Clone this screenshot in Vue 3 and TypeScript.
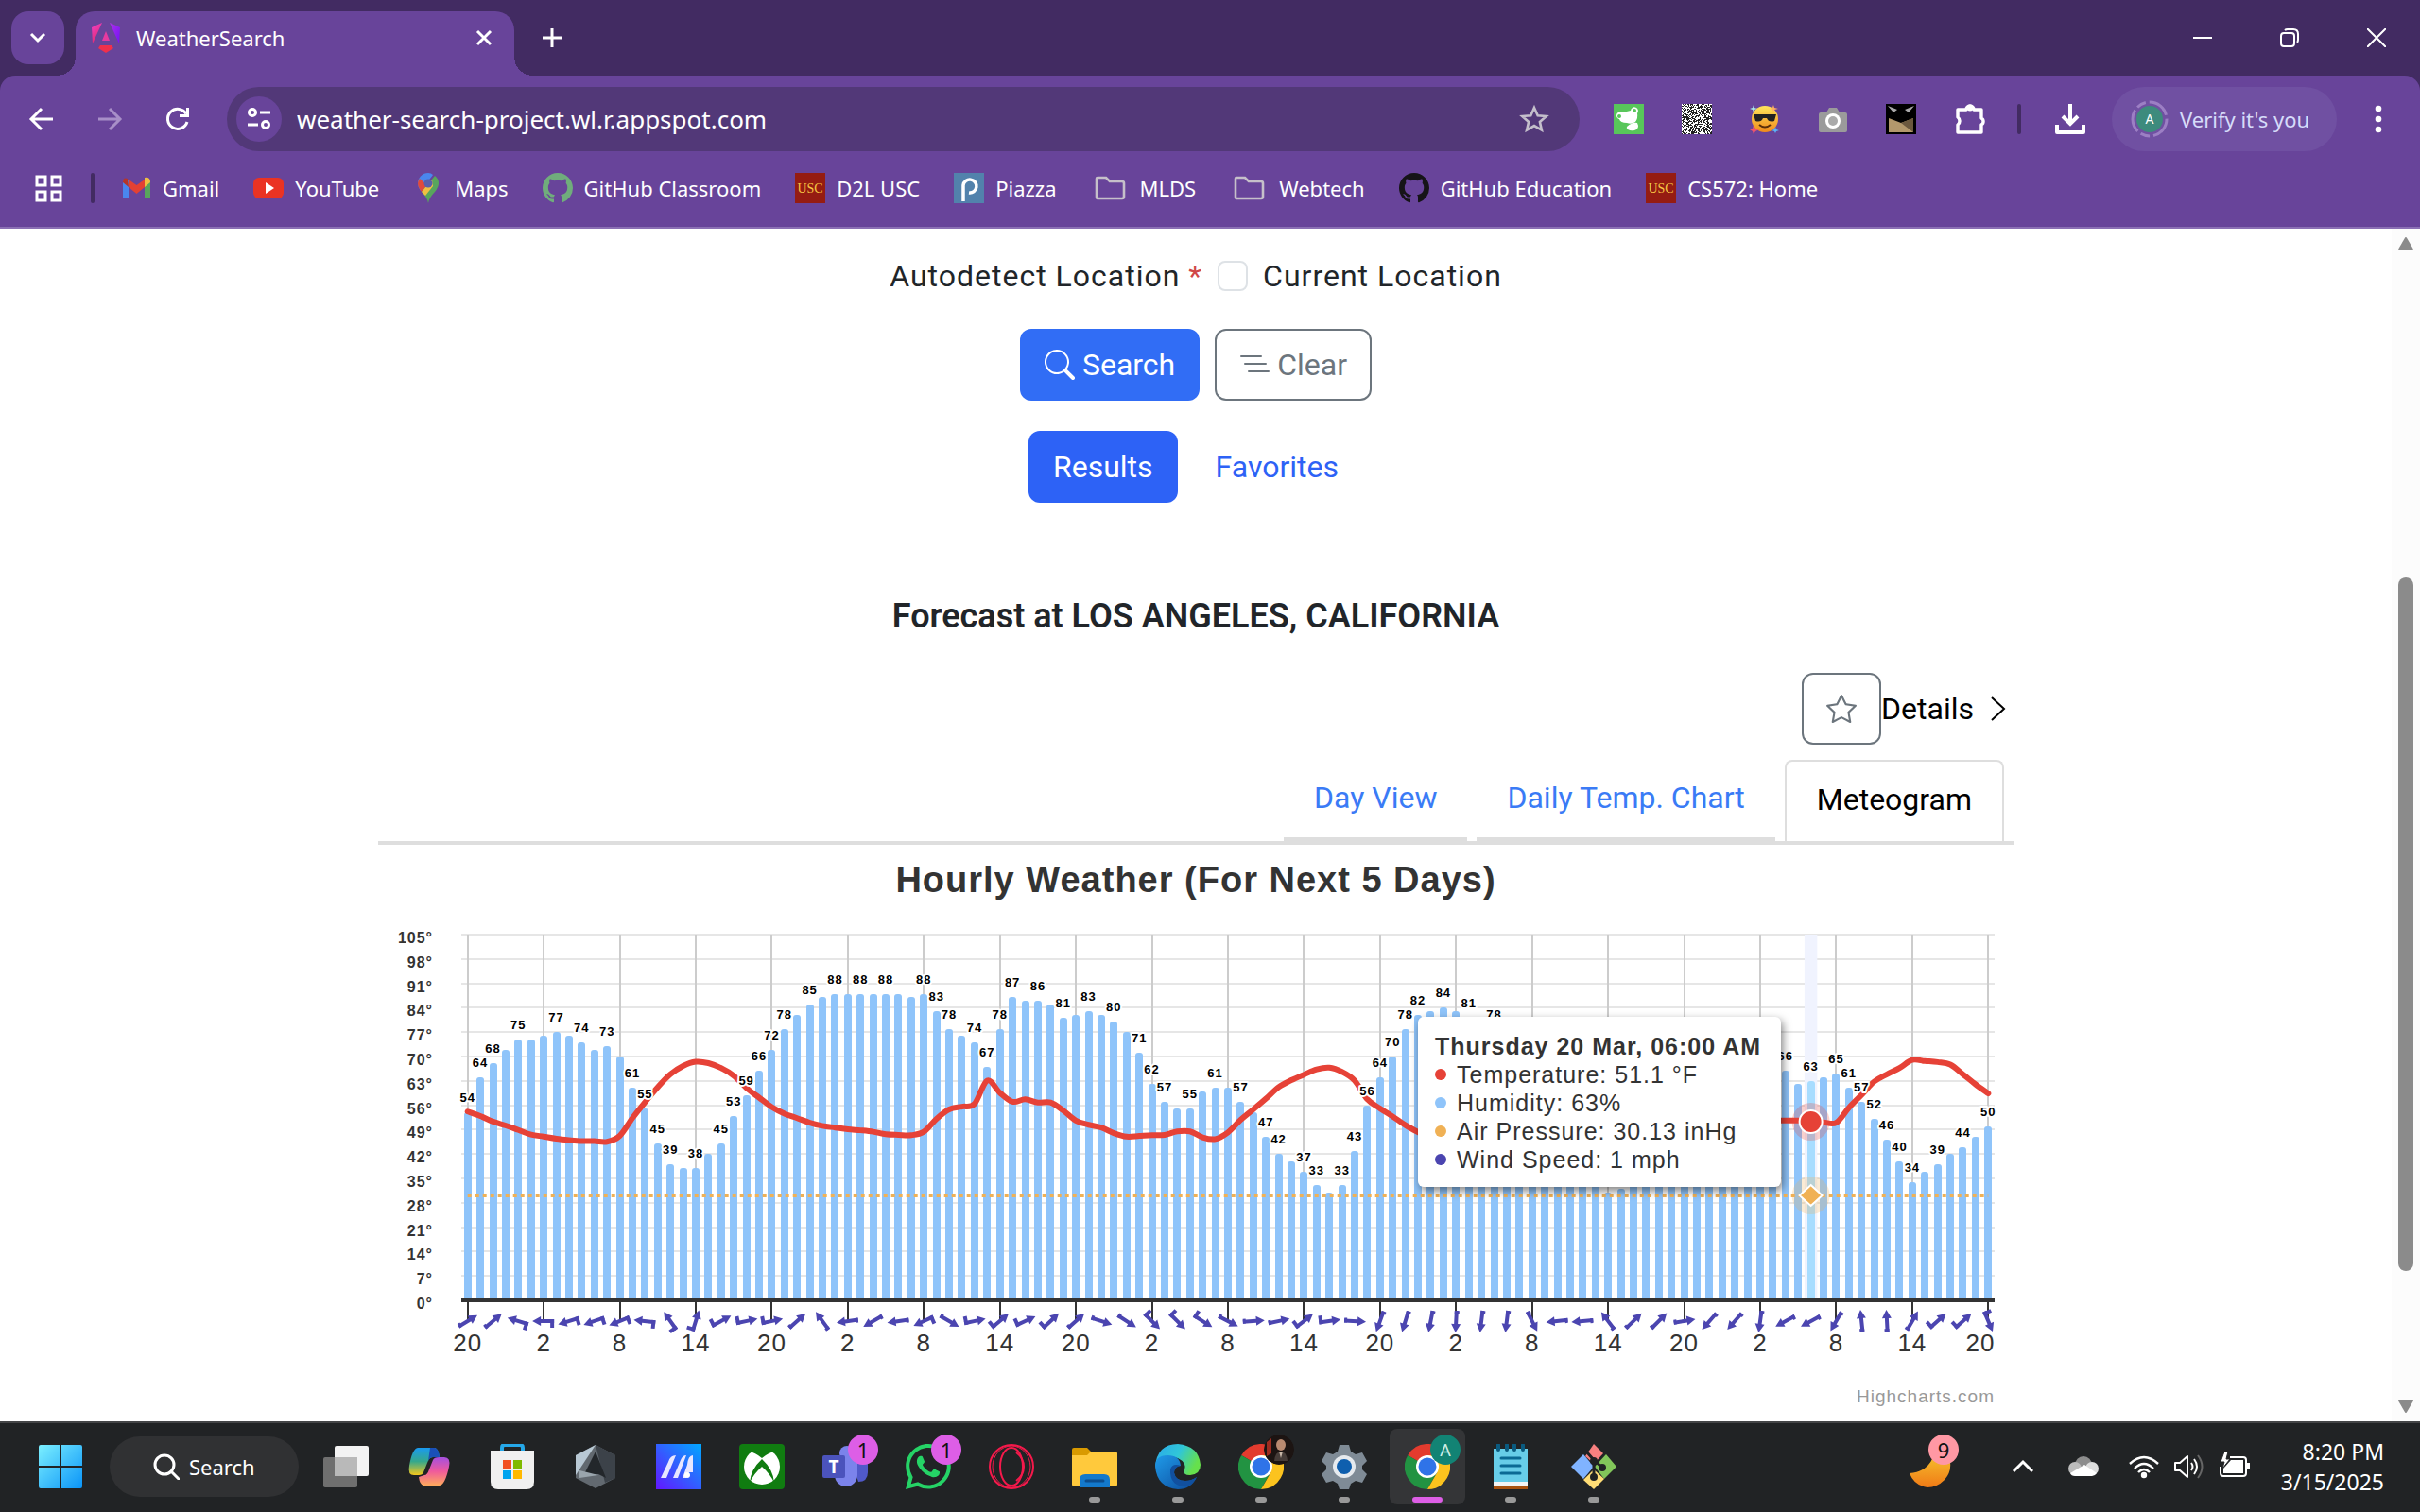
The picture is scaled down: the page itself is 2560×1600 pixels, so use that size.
<script setup lang="ts">
import { computed, ref } from 'vue'

const address = ref('weather-search-project.wl.r.appspot.com')
const useCurrent = ref(false)

interface Bookmark { label: string; icon: string }
const bookmarks: Bookmark[] = [
  { label: 'Gmail', icon: 'gmail' },
  { label: 'YouTube', icon: 'youtube' },
  { label: 'Maps', icon: 'maps' },
  { label: 'GitHub Classroom', icon: 'github-green' },
  { label: 'D2L USC', icon: 'usc' },
  { label: 'Piazza', icon: 'piazza' },
  { label: 'MLDS', icon: 'folder' },
  { label: 'Webtech', icon: 'folder' },
  { label: 'GitHub Education', icon: 'github' },
  { label: 'CS572: Home', icon: 'usc' },
]

const githubPath = 'M8 0C3.58 0 0 3.58 0 8c0 3.54 2.29 6.53 5.47 7.59.4.07.55-.17.55-.38 0-.19-.01-.82-.01-1.49-2.01.37-2.53-.49-2.69-.94-.09-.23-.48-.94-.82-1.13-.28-.15-.68-.52-.01-.53.63-.01 1.08.58 1.23.82.72 1.21 1.87.87 2.33.66.07-.52.28-.87.51-1.07-1.78-.2-3.64-.89-3.64-3.95 0-.87.31-1.59.82-2.15-.08-.2-.36-1.02.08-2.12 0 0 .67-.21 2.2.82.64-.18 1.32-.27 2-.27.68 0 1.36.09 2 .27 1.53-1.04 2.2-.82 2.2-.82.44 1.1.16 1.92.08 2.12.51.56.82 1.27.82 2.15 0 3.07-1.87 3.75-3.65 3.95.29.25.54.73.54 1.48 0 1.07-.01 1.93-.01 2.2 0 .21.15.46.55.38A8.013 8.013 0 0016 8c0-4.42-3.58-8-8-8z'

// Dense module pattern for the QR extension icon
const qrPath = (() => {
  let seed = 7
  let d = ''
  for (let y = 0; y < 32; y++) {
    for (let x = 0; x < 32; x++) {
      seed = (seed * 16807) % 2147483647
      if ((seed >> 10) % 2) d += `M${x} ${y}h1v1h-1z`
    }
  }
  return d
})()

interface TaskApp { name: string; badge?: string; state?: string }
const apps: TaskApp[] = [
  { name: 'taskview' }, { name: 'copilot' }, { name: 'store' }, { name: 'armoury' },
  { name: 'myasus' }, { name: 'xbox' }, { name: 'teams', badge: '1' }, { name: 'whatsapp', badge: '1' },
  { name: 'opera' }, { name: 'files', state: 'open' }, { name: 'edge', state: 'open' },
  { name: 'chrome-photo', state: 'open' }, { name: 'settings', state: 'open' },
  { name: 'chrome-a', state: 'active' }, { name: 'notepad', state: 'open' }, { name: 'git', state: 'open' },
]

// Plot geometry, in chart units
const left = 88
const right = 1710
const top = 95
const bottom = 482
const step = (right - left) / 121
const xAt = (i: number) => left + step * (i + 0.5)
const yAt = (v: number) => bottom - (v * (bottom - top)) / 105

const humidity = [
  54, 64, 68, 72, 75, 75, 76, 77, 76, 74, 72, 73, 70, 61, 55, 45, 39, 38, 38, 42, 45, 53, 59, 66,
  72, 78, 82, 85, 87, 88, 88, 88, 88, 88, 88, 87, 88, 83, 78, 76, 74, 67, 78, 87, 86, 86, 85, 81,
  82, 83, 82, 80, 77, 71, 62, 57, 55, 55, 60, 61, 61, 57, 54, 47, 42, 40, 37, 33, 31, 33, 43, 56,
  64, 70, 78, 82, 83, 84, 83, 81, 79, 78, 76, 70, 62, 54, 48, 42, 37, 34, 31, 32, 34, 38, 44, 52,
  58, 62, 66, 70, 72, 72, 70, 68, 66, 62, 63, 64, 65, 61, 57, 52, 46, 40, 34, 37, 39, 42, 44, 47, 50,
]
const labelled = [
  0, 1, 2, 4, 7, 9, 11, 13, 14, 15, 16, 18, 20, 21, 22, 23, 24, 25, 27, 29, 31, 33, 36, 37, 38, 40, 41,
  42, 43, 45, 47, 49, 51, 53, 54, 55, 57, 59, 61, 63, 64, 66, 67, 69, 70, 71, 72, 73, 74, 75, 77, 79, 81,
  104, 106, 108, 109, 110, 111, 112, 113, 114, 116, 118, 120,
]
const temperature = [
  54.2, 52.9, 51.3, 50.2, 48.9, 47.6, 47, 46.4, 46, 45.7, 45.7, 45.5, 47.2, 52.3, 56.9, 61.2, 64.9, 67.3,
  68.5, 68.1, 66.7, 64.5, 61, 58.2, 55.5, 53.6, 52.3, 51, 50.1, 49.6, 49.1, 48.8, 48.4, 47.7, 47.5, 47.4,
  48.4, 52.1, 54.8, 55.6, 56.4, 63.1, 59.6, 57, 57.7, 56.8, 56.8, 54.5, 51.6, 50.4, 49.6, 48, 47, 47.2,
  47.4, 47.5, 48.5, 48.5, 46.8, 46.3, 48.2, 51.8, 54.8, 57.9, 61.2, 63.2, 64.8, 66.3, 66.8, 65.6, 63.1,
  57.7, 55.1, 52.8, 50.3, 48.3, 46.6, 45.5, 44.8, 44, 43.5, 43.2, 43, 43.5, 46, 50, 54, 58, 61, 63, 65,
  65, 63, 61, 59, 57, 55, 54, 53, 52.3, 52, 51.8, 51.7, 51.7, 51.6, 51.6, 51.5, 51.1, 51, 55.3, 59,
  62.8, 64.9, 66.7, 69, 68.7, 68.4, 67.7, 64.9, 62, 59.4,
]
// Heading of each two-hour wind mark in screen degrees; the flag adds a barb
const winds: [number, number][] = [
  [-31, 0], [-40, 0], [197, 1], [180, 1], [163, 1], [161, 1], [158, 1], [186, 1], [235, 1], [-73, 1],
  [-28, 1], [-12, 1], [-12, 1], [-42, 0], [234, 0], [172, 0], [150, 0], [172, 0], [155, 1], [30, 0],
  [-12, 1], [-40, 1], [-25, 1], [-43, 1], [-42, 0], [18, 0], [33, 0], [45, 1], [45, 1], [32, 1],
  [27, 0], [-4, 0], [-12, 0], [-38, 1], [-8, 1], [3, 0], [110, 0], [107, 0], [101, 0], [93, 0],
  [97, 0], [97, 0], [63, 0], [174, 0], [175, 0], [233, 0], [-44, 0], [-45, 0], [-9, 0], [131, 0],
  [131, 0], [98, 0], [152, 0], [152, 0], [120, 0], [264, 0], [267, 0], [-60, 0], [-42, 1], [-42, 1], [67, 1],
]
const yTicks = Array.from({ length: 16 }, (_, i) => i * 7)
const xTicks = Array.from({ length: 21 }, (_, i) => ({ i: i * 6, text: String([20, 2, 8, 14][i % 4]) }))
const hovered = 106

const barPath = (i: number) => {
  const x = Math.round(xAt(i) - 4)
  const y = Math.round(yAt(humidity[i]))
  return `M${x} ${bottom}V${y + 3}q0 -3 3 -3h2q3 0 3 3V${bottom}z`
}
const tempPath = computed(() => {
  const p = temperature.map((v, i) => [xAt(i), yAt(v)])
  let d = `M${p[0][0]} ${p[0][1]}`
  for (let i = 0; i < p.length - 1; i++) {
    const a = p[Math.max(0, i - 1)]
    const b = p[i]
    const c = p[i + 1]
    const e = p[Math.min(p.length - 1, i + 2)]
    d += `C${b[0] + (c[0] - a[0]) / 6} ${b[1] + (c[1] - a[1]) / 6} ${c[0] - (e[0] - b[0]) / 6} ${c[1] - (e[1] - b[1]) / 6} ${c[0]} ${c[1]}`
  }
  return d
})

const readings = [
  { text: 'Temperature: 51.1 °F', kind: 'temp' },
  { text: 'Humidity: 63%', kind: 'hum' },
  { text: 'Air Pressure: 30.13 inHg', kind: 'air' },
  { text: 'Wind Speed: 1 mph', kind: 'wind' },
]
</script>

<template>
  <div class="screen">
    <header class="browser">
      <div class="tabstrip">
        <button class="tabsearch" aria-label="Search tabs">
          <svg width="20" height="20" viewBox="0 0 20 20"><path d="M3 6l7 7 7-7" fill="none" stroke="#fff" stroke-width="3" /></svg>
        </button>
        <div class="tab">
          <svg width="32" height="32" viewBox="0 0 32 32">
            <defs>
              <linearGradient id="ngl" x1="0" y1="0" x2=".4" y2="1"><stop offset="0" stop-color="#f040c8" /><stop offset="1" stop-color="#e02b6f" /></linearGradient>
              <linearGradient id="ngr" x1="0" y1="0" x2="1" y2="1"><stop offset="0" stop-color="#b030e8" /><stop offset="1" stop-color="#7012f5" /></linearGradient>
            </defs>
            <path d="M12 0L1 5l1 17z" fill="url(#ngl)" /><path d="M20 0l11 5-1 17z" fill="url(#ngr)" />
            <path d="M16 9l4 10h-8z" fill="#e63aa0" /><path d="M10 24h12l2 3-8 5-8-5z" fill="#f0304c" />
          </svg>
          <span class="tabtitle">WeatherSearch</span>
          <button class="plain" aria-label="Close tab">
            <svg width="20" height="20" viewBox="0 0 20 20"><path d="M3 3l14 14M17 3L3 17" stroke="#fff" stroke-width="3" /></svg>
          </button>
        </div>
        <button class="plain newtab" aria-label="New tab">
          <svg width="20" height="20" viewBox="0 0 20 20"><path d="M10 0v20M0 10h20" stroke="#fff" stroke-width="3" /></svg>
        </button>
        <div class="wincontrols">
          <button class="plain" aria-label="Minimize"><svg width="20" height="20" viewBox="0 0 20 20"><path d="M0 10h20" stroke="#fff" stroke-width="2" /></svg></button>
          <button class="plain" aria-label="Restore"><svg width="20" height="20" viewBox="0 0 20 20" fill="none" stroke="#fff" stroke-width="2"><rect x="1" y="5" width="14" height="14" rx="3" /><path d="M5 2q1-1 3-1h6q5 0 5 5v6q0 2-1 3" /></svg></button>
          <button class="plain" aria-label="Close"><svg width="20" height="20" viewBox="0 0 20 20"><path d="M0 0l20 20M20 0L0 20" stroke="#fff" stroke-width="2" /></svg></button>
        </div>
      </div>

      <div class="toolbar">
        <div class="navrow">
          <div class="navbtns">
            <button class="plain" aria-label="Back"><svg width="32" height="32" viewBox="0 0 32 32"><path d="M28 16H6M16 5L5 16l11 11" fill="none" stroke="#fff" stroke-width="3" /></svg></button>
            <button class="plain" aria-label="Forward"><svg width="32" height="32" viewBox="0 0 32 32"><path d="M4 16h22M16 5l11 11-11 11" fill="none" stroke="#a88fc8" stroke-width="3" /></svg></button>
            <button class="plain" aria-label="Reload"><svg width="32" height="32" viewBox="0 0 32 32"><path d="M26 19a10.500 10.500 0 1 1-1-8.500" fill="none" stroke="#fff" stroke-width="3" /><path d="M28 4v10H18v-3h7V4z" fill="#fff" /></svg></button>
          </div>
          <div class="omnibox">
            <button class="siteinfo" aria-label="Site information">
              <svg width="24" height="24" viewBox="0 0 24 24" fill="none" stroke="#fff" stroke-width="3"><circle cx="5" cy="5" r="3.500" /><path d="M13 5h11M0 18h11" /><circle cx="19" cy="18" r="3.500" /></svg>
            </button>
            <input v-model="address" class="url" type="text" aria-label="Address" />
            <button class="plain" aria-label="Bookmark this tab">
              <svg width="32" height="32" viewBox="0 0 32 32"><path d="M16 4l3.700 8.200 9 .8-6.800 5.900 2 8.800-7.900-4.600-7.900 4.600 2-8.800L3.300 13l9-.8z" fill="none" stroke="#c4bfcb" stroke-width="2.600" /></svg>
            </button>
          </div>
          <div class="extensions">
            <svg width="32" height="32" viewBox="0 0 32 32"><rect width="32" height="32" fill="#58c65a" /><path d="M3 12a4 4 0 0 1 6-3q5-1 9-2a4 4 0 1 1 7 3q1 5-2 9-4 3-9 1-7 0-8-4-3-1-3-4z" fill="#fff" /><path d="M14 24q6-5 11-4l1 3q0 4-4 5-4 1-7-1-2-2-1-3z" fill="#fff" /><circle cx="22" cy="7" r="2" fill="#58c65a" /><circle cx="6" cy="13" r="2" fill="#58c65a" /></svg>
            <svg width="32" height="32" viewBox="0 0 32 32"><rect width="32" height="32" fill="#fff" /><path :d="qrPath" fill="#222" /></svg>
            <svg width="32" height="32" viewBox="0 0 32 32">
              <defs><linearGradient id="emo" x1="0" y1="0" x2="0" y2="1"><stop offset="0" stop-color="#ffe65a" /><stop offset="1" stop-color="#f08a1c" /></linearGradient></defs>
              <circle cx="16" cy="16" r="14" fill="url(#emo)" /><path d="M4 11h24l-2 7q-6 2-8-3h-4q-2 5-8 3z" fill="#222" /><path d="M10 22q6 5 12 0" fill="none" stroke="#5a2d08" stroke-width="2" />
              <path d="M4 1l1 3 3 1-3 1-1 3-1-3-3-1 3-1z" fill="#a8e8e8" /><path d="M25 1l1 3 4 1-4 1-1 3-1-3-3-1 3-1z" fill="#ffb060" /><path d="M4 22l2 4 4 1-4 2-2 3-1-3-3-2 3-1z" fill="#f0546c" /><path d="M27 24l1 3 3 1-3 1-1 2-1-2-3-1 3-1z" fill="#5ab4f8" />
            </svg>
            <svg width="32" height="32" viewBox="0 0 32 32"><path d="M3 9h6l3-5h8l3 5h6q2 0 2 2v17q0 2-2 2H3q-2 0-2-2V11q0-2 2-2z" fill="#9b9b9b" /><circle cx="16" cy="18" r="8" fill="#fff" /><circle cx="16" cy="18" r="5" fill="#aaa" /></svg>
            <svg width="32" height="32" viewBox="0 0 32 32"><rect width="32" height="32" fill="#000" /><path d="M2 2l10 4-4 3zM30 2L20 6l4 3z" fill="#aaa" /><path d="M3 30V15l13 5 13-5v15z" fill="#b3986c" /><path d="M16 20l13-5v15z" fill="#6b583e" /></svg>
            <button class="plain" aria-label="Extensions"><svg width="34" height="34" viewBox="0 0 34 34"><path d="M4 7h9a4 4 0 0 1 8 0h8v9a4 4 0 0 1 0 7v8H4v-8a5 5 0 0 0 0-8z" fill="none" stroke="#fff" stroke-width="3.400" stroke-linejoin="round" /><circle cx="17" cy="5" r="3.500" fill="#fff" /></svg></button>
          </div>
          <span class="divider" />
          <button class="plain" aria-label="Downloads"><svg width="32" height="32" viewBox="0 0 32 32" fill="none" stroke="#fff" stroke-width="4"><path d="M16 0v20M8 13l8 8 8-8" /><path d="M2 22v8h28v-8" stroke-linejoin="round" /></svg></button>
          <button class="verify">
            <svg width="40" height="40" viewBox="0 0 40 40"><circle cx="20" cy="20" r="18" fill="none" stroke="#9c7fc4" stroke-width="3" stroke-dasharray="24 4 10 4" /><circle cx="20" cy="20" r="14" fill="#3d8b7d" /><text x="20" y="25" class="avatar">A</text></svg>
            Verify it's you
          </button>
          <button class="plain" aria-label="Menu"><svg width="32" height="32" viewBox="0 0 32 32" fill="#fff"><circle cx="16" cy="5" r="3.300" /><circle cx="16" cy="16" r="3.300" /><circle cx="16" cy="27" r="3.300" /></svg></button>
        </div>

        <nav class="bookmarks">
          <svg width="32" height="32" viewBox="0 0 32 32" fill="none" stroke="#fff" stroke-width="3"><rect x="3" y="4" width="9" height="9" /><rect x="19" y="4" width="9" height="9" /><rect x="3" y="20" width="9" height="9" /><rect x="19" y="20" width="9" height="9" /></svg>
          <span class="divider" />
          <a v-for="b in bookmarks" :key="b.label" href="#" :class="['bookmark', { isfolder: b.icon === 'folder' }]">
            <svg width="32" height="32" viewBox="0 0 32 32">
              <g v-if="b.icon === 'gmail'"><path d="M2 27V8h6v19z" fill="#4a86ee" /><path d="M25 27V8h6v19z" fill="#58a65c" /><path d="M25 5q6-1 6 5l-6 5z" fill="#f0bf42" /><path d="M2 10q0-6 5-4l1 9z" fill="#b5362a" /><path d="M8 15V7l8.500 6L25 7v8l-8.500 7z" fill="#e34133" /></g>
              <g v-else-if="b.icon === 'youtube'"><rect y="5" width="32" height="22" rx="6" fill="#ea3323" /><path d="M13 10v12l9-6z" fill="#fff" /></g>
              <g v-else-if="b.icon === 'maps'"><path d="M16 0A11 11 0 0 0 5 11q0 4 3 8l13-17q-2-2-5-2z" fill="#4a86ee" /><path d="M5 11q0 4 4 9l6-7-8-7q-2 2-2 5z" fill="#e04a3c" /><path d="M9 20l14-17q4 3 4 8 0 4-4 9-6 6-7 12-1-6-7-12z" fill="#58a65c" /><path d="M9 20l11-13 1 7-8 10z" fill="#f0bf42" /><circle cx="16" cy="11" r="4.500" fill="#5a5faa" /></g>
              <path v-else-if="b.icon === 'github-green'" transform="scale(2)" :d="githubPath" fill="#70ad7c" />
              <path v-else-if="b.icon === 'github'" transform="scale(2)" :d="githubPath" fill="#161418" />
              <g v-else-if="b.icon === 'usc'"><rect width="32" height="32" fill="#951c12" /><text x="16" y="21" class="usc">USC</text></g>
              <g v-else-if="b.icon === 'piazza'"><rect width="32" height="32" fill="#5282ac" /><path d="M10 30V13a7 7 0 1 1 6 8" fill="none" stroke="#fff" stroke-width="3.500" /></g>
              <path v-else d="M2 6q0-1 1-1h9l4 4h13q2 0 2 2v14q0 2-2 2H3q-1 0-1-2z" fill="none" stroke="#c6c0ca" stroke-width="2.600" />
            </svg>
            {{ b.label }}
          </a>
        </nav>
      </div>
    </header>

    <div class="viewport">
      <main class="page">
        <div class="autodetect">
          <span>Autodetect Location <span class="required">*</span></span>
          <input id="current" v-model="useCurrent" type="checkbox" />
          <label for="current">Current Location</label>
        </div>
        <div class="actions">
          <button class="btn primary">
            <svg width="32" height="32" viewBox="0 0 16 16" fill="currentColor"><path d="M11.742 10.344a6.500 6.500 0 1 0-1.397 1.398h-.001c.03.04.062.078.098.115l3.850 3.850a1 1 0 0 0 1.415-1.414l-3.850-3.850a1.007 1.007 0 0 0-.115-.1zM12 6.500a5.500 5.500 0 1 1-11 0 5.500 5.500 0 0 1 11 0z" /></svg>
            Search
          </button>
          <button class="btn outline">
            <svg width="32" height="32" viewBox="0 0 32 32"><path d="M2 7h21M6 15h22M10 23h21" stroke="currentColor" stroke-width="2" stroke-linecap="round" /></svg>
            Clear
          </button>
        </div>
        <div class="pills">
          <button class="btn results">Results</button>
          <button class="btn favorites">Favorites</button>
        </div>
        <h2 class="forecast">Forecast at LOS ANGELES, CALIFORNIA</h2>

        <section class="panel">
          <div class="detailrow">
            <button class="btn outline fav" aria-label="Add to favorites">
              <svg width="32" height="32" viewBox="0 0 16 16" fill="currentColor"><path d="M2.866 14.850c-.078.444.36.791.746.593l4.390-2.256 4.389 2.256c.386.198.824-.149.746-.592l-.83-4.730 3.522-3.356c.33-.314.16-.888-.282-.95l-4.898-.696L8.465.792a.513.513 0 0 0-.927 0L5.354 5.120l-4.898.696c-.441.062-.612.636-.283.95l3.523 3.356-.83 4.730zm4.905-2.767-3.686 1.894.694-3.957a.56.56 0 0 0-.163-.505L1.710 6.745l4.052-.576a.53.53 0 0 0 .393-.288L8 2.223l1.847 3.658a.53.53 0 0 0 .393.288l4.052.575-2.906 2.770a.56.56 0 0 0-.163.506l.694 3.957-3.686-1.894a.5.5 0 0 0-.461 0z" /></svg>
            </button>
            <a href="#" class="details">Details
              <svg width="32" height="32" viewBox="0 0 32 32"><path d="M9 4l13 12L9 28" fill="none" stroke="#000" stroke-width="2" /></svg>
            </a>
          </div>
          <nav class="tabs">
            <a href="#" class="viewtab">Day View</a>
            <a href="#" class="viewtab">Daily Temp. Chart</a>
            <a href="#" class="viewtab current">Meteogram</a>
          </nav>

          <div class="chart">
            <svg class="plot" viewBox="0 0 1730 604" role="img" aria-label="Hourly Weather (For Next 5 Days)">
              <text x="865" y="50" class="title">Hourly Weather (For Next 5 Days)</text>
              <g stroke="#e6e6e6" stroke-width="2">
                <line v-for="v in yTicks" :key="v" :x1="left" :x2="right" :y1="Math.round(yAt(v))" :y2="Math.round(yAt(v))" />
              </g>
              <g stroke="#ccc" stroke-width="2">
                <line v-for="t in xTicks" :key="t.i" :x1="Math.round(xAt(t.i))" :x2="Math.round(xAt(t.i))" :y1="top" :y2="bottom" />
              </g>
              <rect :x="xAt(hovered) - step / 2" :y="top" :width="step" :height="bottom - top" fill="#f0f3fe" />
              <path v-for="(v, i) in humidity" :key="i" :d="barPath(i)" :fill="i === hovered ? '#a8ddff' : '#8fc4fa'" />
              <path :d="tempPath" fill="none" stroke="#e64237" stroke-width="6" stroke-linejoin="round" stroke-linecap="round" />
              <line :x1="xAt(0)" :x2="xAt(120)" :y1="yAt(30.13)" :y2="yAt(30.13)" stroke="#f0b155" stroke-width="4" stroke-dasharray="4 4" />
              <g stroke="#333">
                <line :x1="left" :x2="right" :y1="bottom" :y2="bottom" stroke-width="4" />
                <line v-for="t in xTicks" :key="t.i" :x1="Math.round(xAt(t.i))" :x2="Math.round(xAt(t.i))" :y1="bottom" :y2="bottom + 21" stroke-width="2" />
              </g>
              <g fill="#4b45b0">
                <g v-for="(w, i) in winds" :key="i" :transform="`translate(${xAt(i * 2)} 504) rotate(${w[0]})`">
                  <path d="M-11 -2H3V-5L12 0L3 5V2H-11z" />
                  <path :d="w[1] ? 'M-11 2V-7H-7V2z' : 'M-11 2V-3H-8V2z'" />
                </g>
              </g>
              <circle :cx="xAt(hovered)" cy="293" r="20" fill="#e64237" fill-opacity=".25" />
              <circle :cx="xAt(hovered)" cy="293" r="12" fill="#e64237" stroke="#fff" stroke-width="2" />
              <circle :cx="xAt(hovered)" cy="371" r="20" fill="#f0b155" fill-opacity=".25" />
              <path :d="`M${xAt(hovered)} 360l12 11l-12 11l-12 -11z`" fill="#f0b155" stroke="#fff" stroke-width="2" />
              <g class="values">
                <text v-for="i in labelled" :key="i" :x="xAt(i)" :y="yAt(humidity[i]) - 11">{{ humidity[i] }}</text>
              </g>
              <g class="yaxis">
                <text v-for="v in yTicks" :key="v" x="58" :y="yAt(v) + 9">{{ v }}°</text>
              </g>
              <g class="xaxis">
                <text v-for="t in xTicks" :key="t.i" :x="t.i === 120 ? 1695 : xAt(t.i)" y="536">{{ t.text }}</text>
              </g>
              <text x="1710" y="590" class="credits">Highcharts.com</text>
            </svg>
            <div class="tooltip">
              <strong>Thursday 20 Mar, 06:00 AM</strong>
              <span v-for="r in readings" :key="r.kind" :class="['reading', r.kind]">{{ r.text }}</span>
            </div>
          </div>
        </section>
      </main>
      <div class="scrollbar">
        <svg width="16" height="14" viewBox="0 0 16 14"><path d="M8 1l7 12H1z" fill="#8b8b8b" stroke="#8b8b8b" stroke-width="2" stroke-linejoin="round" /></svg>
        <div class="track"><div class="thumb" /></div>
        <svg width="16" height="14" viewBox="0 0 16 14"><path d="M8 13l7-12H1z" fill="#8b8b8b" stroke="#8b8b8b" stroke-width="2" stroke-linejoin="round" /></svg>
      </div>
    </div>

    <footer class="taskbar">
      <button class="appbtn" aria-label="Start">
        <svg width="46" height="46" viewBox="0 0 46 46">
          <defs><linearGradient id="win" x1="0" y1="0" x2="1" y2="1"><stop offset="0" stop-color="#7cf0ff" /><stop offset="1" stop-color="#0a94f8" /></linearGradient></defs>
          <path d="M2 0h20v22H0V2q0-2 2-2zM24 0h20q2 0 2 2v20H24zM0 24h22v22H2q-2 0-2-2zM24 24h22v20q0 2-2 2H24z" fill="url(#win)" />
        </svg>
      </button>
      <button class="tasksearch">
        <svg width="28" height="28" viewBox="0 0 28 28" fill="none" stroke="#fff" stroke-width="3"><circle cx="12" cy="12" r="10" /><path d="M19 19l8 8" stroke-linecap="round" /></svg>
        Search
      </button>
      <div class="apps">
        <button v-for="a in apps" :key="a.name" :class="['appbtn', a.state]" :aria-label="a.name">
          <svg width="48" height="48" viewBox="0 0 48 48">
            <g v-if="a.name === 'taskview'"><rect x="12" y="2" width="36" height="32" rx="2" fill="#f3f3f3" /><rect y="14" width="36" height="32" rx="2" fill="#6f6f6f" /><path d="M12 14h24v20H12z" fill="#b9b9b9" /></g>
            <g v-else-if="a.name === 'copilot'">
              <defs>
                <linearGradient id="cp1" x1="0" y1="0" x2="0" y2="1"><stop offset="0" stop-color="#1a9af0" /><stop offset=".5" stop-color="#35a88c" /><stop offset="1" stop-color="#f4c71c" /></linearGradient>
                <linearGradient id="cp2" x1="0" y1="0" x2="0" y2="1"><stop offset="0" stop-color="#a54fe0" /><stop offset=".5" stop-color="#ef5a9c" /><stop offset="1" stop-color="#ffab5c" /></linearGradient>
              </defs>
              <path d="M12 4h18q4 1 5 10h-7q-4 0-6 6l-4 10q-1 3-5 3H8q-7 0-5-10 3-18 9-19z" fill="url(#cp1)" /><path d="M25 4h5q4 1 5 10h-7q-3 0-5 4z" fill="#1a50b8" />
              <path d="M35 44H18q-4-1-5-9l6-2q3 0 5-6l4-10q1-3 7-3h5q7 0 5 10-4 19-10 20z" fill="url(#cp2)" />
            </g>
            <g v-else-if="a.name === 'store'"><path d="M13 10V4q0-3 3-3h16q3 0 3 3v6" fill="none" stroke="#25a7e8" stroke-width="4" /><path d="M1 7h46v33q0 8-8 8H9q-8 0-8-8z" fill="#f0f0f0" /><path d="M14 17h9v9h-9z" fill="#f25022" /><path d="M25 17h9v9h-9z" fill="#7fba00" /><path d="M14 28h9v9h-9z" fill="#00a4ef" /><path d="M25 28h9v9h-9z" fill="#ffb900" /></g>
            <g v-else-if="a.name === 'armoury'"><path d="M24 1l21 11v24L24 47 3 36V12z" fill="#626970" /><path d="M24 1L3 12v21z" fill="#b8c8d4" /><path d="M24 1l21 11v24L34 41z" fill="#3c4249" /><path d="M24 8l11 28-8-4H12z" fill="#23272b" /><path d="M7 28l20 5-20 3z" fill="#9aa5ad" /></g>
            <g v-else-if="a.name === 'myasus'"><defs><linearGradient id="asus" x1="0" y1="1" x2="1" y2="0"><stop offset="0" stop-color="#6316ff" /><stop offset="1" stop-color="#00a8ff" /></linearGradient></defs><rect width="48" height="48" fill="url(#asus)" /><path d="M5 36l8-17q2-7 8-7l-10 24zM18 36l8-19q2-5 6-5l-9 24zM28 36l5-14q1-10 6-10v18h-4l-3 6z" fill="#e8e6ff" /><circle cx="33" cy="33" r="3" fill="#fff" /></g>
            <g v-else-if="a.name === 'xbox'"><rect width="48" height="48" rx="4" fill="#107c10" /><circle cx="24" cy="24" r="19" fill="#fff" /><path d="M10 8q7 1 14 7 7-6 14-7l-5-4H15zM24 16q12 11 13 25-4-9-13-17-9 8-13 17 1-14 13-25z" fill="#107c10" /></g>
            <g v-else-if="a.name === 'teams'"><circle cx="26" cy="10" r="8" fill="#7b83eb" /><path d="M30 16h18v14q0 10-10 10z" fill="#5059c9" /><path d="M13 16h24v17a12 12 0 0 1-24 0z" fill="#7b83eb" /><rect y="12" width="24" height="24" rx="2" fill="#4b53bc" /><text x="12" y="31" class="teams">T</text></g>
            <path v-else-if="a.name === 'whatsapp'" transform="scale(3)" fill="#25d366" d="M13.601 2.326A7.854 7.854 0 0 0 7.994 0C3.627 0 .068 3.558.064 7.926c0 1.399.366 2.760 1.057 3.965L0 16l4.204-1.102a7.933 7.933 0 0 0 3.790.965h.004c4.368 0 7.926-3.558 7.930-7.930A7.898 7.898 0 0 0 13.600 2.326zM7.994 14.521a6.573 6.573 0 0 1-3.356-.92l-.24-.144-2.494.654.666-2.433-.156-.251a6.560 6.560 0 0 1-1.007-3.505c0-3.626 2.957-6.584 6.591-6.584a6.560 6.560 0 0 1 4.660 1.931 6.557 6.557 0 0 1 1.928 4.660c-.004 3.639-2.961 6.592-6.592 6.592zm3.615-4.934c-.197-.099-1.170-.578-1.353-.646-.182-.065-.315-.099-.445.099-.133.197-.513.646-.627.775-.114.133-.232.148-.43.05-.197-.1-.836-.308-1.592-.985-.59-.525-.985-1.175-1.103-1.372-.114-.198-.011-.304.088-.403.087-.088.197-.232.296-.346.1-.114.133-.198.198-.33.065-.134.034-.248-.015-.347-.05-.099-.445-1.076-.612-1.470-.16-.389-.323-.335-.445-.34-.114-.007-.247-.007-.38-.007a.729.729 0 0 0-.529.247c-.182.198-.691.677-.691 1.654 0 .977.71 1.916.81 2.049.098.133 1.394 2.132 3.383 2.992.47.205.84.326 1.129.418.475.152.904.129 1.246.08.38-.058 1.171-.48 1.338-.943.164-.464.164-.86.114-.943-.049-.084-.182-.133-.38-.232z" />
            <g v-else-if="a.name === 'opera'" fill="none" stroke="#f5194b" stroke-width="2"><circle cx="24" cy="24" r="23" /><ellipse cx="24" cy="24" rx="12" ry="20" /><ellipse cx="24" cy="24" rx="20" ry="22" stroke-width="1" /><path d="M29 9q8 6 8 15t-8 15" /></g>
            <g v-else-if="a.name === 'files'"><path d="M0 6q0-2 2-2h14l5 5v8H0z" fill="#d99a00" /><path d="M0 12h16l4-4h26q2 0 2 2v33q0 2-2 2H2q-2 0-2-2z" fill="#ffc93c" /><path d="M8 46V38q0-6 6-6h20q6 0 6 6v8z" fill="#1379cc" /><path d="M15 39h18" stroke="#0b4d8e" stroke-width="3" stroke-linecap="round" /></g>
            <g v-else-if="a.name === 'edge'">
              <defs><linearGradient id="eg1" x1="0" y1="0" x2="1" y2=".4"><stop offset="0" stop-color="#2aa8ea" /><stop offset=".55" stop-color="#30c6d8" /><stop offset="1" stop-color="#66e04c" /></linearGradient><linearGradient id="eg2" x1="0" y1="0" x2="1" y2="1"><stop offset="0" stop-color="#1f9ae8" /><stop offset="1" stop-color="#0c4a9c" /></linearGradient></defs>
              <path d="M0 24Q2 0 24 0q22 2 24 22 0 10-11 11-8 0-6-5 3-8-7-13-16-5-24 9z" fill="url(#eg1)" />
              <path d="M0 24q0-12 13-12 13 0 14 11-7 0-7 8 2 8 12 8 7 0 12-4-6 13-20 13Q2 46 0 24z" fill="url(#eg2)" />
              <path d="M16 27q-1 18 17 18 7-2 11-10-6 4-12 4-11 0-12-9 1-6 7-7-9-3-11 4z" fill="#11509f" />
            </g>
            <g v-else-if="a.name === 'chrome-photo' || a.name === 'chrome-a'">
              <path d="M24 24L3.200 12A24 24 0 0 1 44.800 12z" fill="#e33b2e" /><path d="M24 24L3.200 12A24 24 0 0 0 24 48l10-18z" fill="#229342" /><path d="M24 24l10.400 6L24 48A24 24 0 0 0 44.800 12H24z" fill="#fcc31e" />
              <circle cx="24" cy="24" r="12" fill="#fff" /><circle cx="24" cy="24" r="9.500" fill="#2f73e8" />
            </g>
            <g v-else-if="a.name === 'settings'"><path d="M19 1h10l2 7 5 3 7-2 5 9-5 5v4l5 5-5 9-7-2-5 3-2 6H19l-2-6-5-3-7 2-5-9 5-5v-4l-5-5 5-9 7 2 5-3z" fill="#7f8b96" /><circle cx="24" cy="24" r="12" fill="#e6eaee" /><circle cx="24" cy="24" r="8" fill="#0f5fae" /></g>
            <g v-else-if="a.name === 'notepad'"><path d="M6 5h36v36H6z" fill="#67cde8" /><path d="M6 40h36v4H6z" fill="#f3f3f3" /><path d="M6 44h36v4H6z" fill="#a9520f" /><path d="M11 1v5M20 1v5M28 1v5M37 1v5" stroke="#0a5b80" stroke-width="4" stroke-linecap="round" /><path d="M14 15h20M14 23h20M14 31h20" stroke="#0b6a94" stroke-width="3" stroke-linecap="round" /></g>
            <g v-else><path d="M24 0l10 10-10 11-9-8z" fill="#f88080" /><path d="M0 24l13-13 11 13-11 13z" fill="#80b3ff" /><path d="M37 11l11 13-13 13-10-13z" fill="#82c65a" /><path d="M24 27l11 10-11 11-11-10z" fill="#ffdd76" /><path d="M17 9l7 8v19M24 17l9 8" fill="none" stroke="#202224" stroke-width="3" /><circle cx="24" cy="18" r="4" fill="#202224" /><circle cx="33" cy="25" r="4" fill="#202224" /><circle cx="24" cy="35" r="4" fill="#202224" /></g>
          </svg>
          <span v-if="a.badge" class="badge">{{ a.badge }}</span>
          <span v-else-if="a.name === 'chrome-a'" class="badge letter">A</span>
          <svg v-else-if="a.name === 'chrome-photo'" class="badge photo" viewBox="0 0 32 32"><circle cx="16" cy="16" r="16" fill="#1c1412" /><path d="M3 8l5-4v16l-5 3z" fill="#9c2c20" /><ellipse cx="18" cy="11" rx="5" ry="6" fill="#b98a70" /><path d="M11 28q1-10 7-10t7 10z" fill="#463c38" /><path d="M16 18h4l-2 7z" fill="#c9b8a8" /></svg>
        </button>
      </div>
      <div class="tray">
        <button class="appmoon" aria-label="Weather widget">
          <svg width="52" height="56" viewBox="0 0 52 56"><defs><linearGradient id="moon" x1="0" y1="0" x2="0" y2="1"><stop offset="0" stop-color="#f5bb2c" /><stop offset="1" stop-color="#f07a16" /></linearGradient></defs><path d="M0 41q18-1 25-17h17q4 14-5 24-8 8-18 8Q5 54 0 41z" fill="url(#moon)" /></svg>
          <span class="badge pink">9</span>
        </button>
        <button class="plain" aria-label="Show hidden icons"><svg width="32" height="32" viewBox="0 0 32 32"><path d="M6 21L16 11l10 10" fill="none" stroke="#fff" stroke-width="3" /></svg></button>
        <svg width="32" height="32" viewBox="0 0 32 32"><circle cx="16" cy="14" r="9" fill="#8d8d8d" /><circle cx="7" cy="18" r="7" fill="#bcbcbc" /><circle cx="25" cy="18" r="7" fill="#dedede" /><path d="M2 23l15-9 13 9q-2 3-5 3H7q-4 0-5-3z" fill="#fff" /></svg>
        <div class="status">
          <svg width="32" height="32" viewBox="0 0 32 32" fill="none" stroke="#fff" stroke-width="2.400"><path d="M1 13q15-14 30 0M6 18q10-10 20 0M10 22q6-6 12 0" /><circle cx="16" cy="25" r="2" fill="#fff" /></svg>
          <svg width="32" height="32" viewBox="0 0 32 32" fill="none" stroke="#fff" stroke-width="2"><path d="M1 12h5l8-7v22l-8-7H1z" stroke-linejoin="round" /><path d="M18 12q3 4 0 8M21 8q6 8 0 16" /><path d="M25 4q9 12 0 24" stroke="#666" /></svg>
          <svg width="32" height="32" viewBox="0 0 32 32"><path d="M11 6h14q3 0 3 3v14q0 3-3 3H4q-3 0-3-3v-7" fill="none" stroke="#fff" stroke-width="2" /><path d="M29 12h3v7h-3z" fill="#fff" /><path d="M12 9h13v14H4v-5z" fill="#fff" /><path d="M5 0L1 11h4l-2 7 8-10H7l2-8z" fill="#fff" stroke="#222426" stroke-width="1" /></svg>
        </div>
        <div class="clock"><span>8:20 PM</span><span>3/15/2025</span></div>
      </div>
    </footer>
  </div>
</template>

<style>
body {
  background: #fff;
}
</style>

<style scoped>
.screen {
  height: 100vh;
  display: flex;
  flex-direction: column;
  font-family: "Noto Sans", sans-serif;
  font-size: 22px;
}
.screen * {
  box-sizing: border-box;
}
svg {
  display: block;
  flex: none;
}
button {
  font: inherit;
  color: inherit;
  cursor: pointer;
}
a {
  text-decoration: none;
}
.plain {
  display: flex;
  padding: 0;
  border: 0;
  background: none;
}

/* Browser frame */
.browser {
  background: #422b62;
  color: #fff;
}
.tabstrip {
  display: flex;
  align-items: center;
  height: 80px;
  padding: 0 36px 0 12px;
}
.tabsearch {
  display: flex;
  align-items: center;
  justify-content: center;
  width: 56px;
  height: 56px;
  border: 0;
  border-radius: 18px;
  background: #68449a;
}
.tab {
  position: relative;
  display: flex;
  align-items: center;
  gap: 16px;
  align-self: flex-end;
  width: 464px;
  height: 68px;
  margin-left: 12px;
  padding: 0 22px 12px 16px;
  border-radius: 20px 20px 0 0;
  background: #68449a;
}
.tab::before,
.tab::after {
  content: "";
  position: absolute;
  bottom: 0;
  width: 20px;
  height: 20px;
}
.tab::before {
  left: -20px;
  background: radial-gradient(circle at 0 0, transparent 20px, #68449a 20px);
}
.tab::after {
  right: -20px;
  background: radial-gradient(circle at 100% 0, transparent 20px, #68449a 20px);
}
.tabtitle {
  flex: 1;
}
.newtab {
  margin-left: 30px;
}
.wincontrols {
  display: flex;
  gap: 72px;
  margin-left: auto;
}
.toolbar {
  height: 162px;
  border-bottom: 2px solid #8b70b4;
  border-radius: 16px 16px 0 0;
  background: #68449a;
}
.navrow {
  display: flex;
  align-items: center;
  padding: 12px 28px 0;
}
.navbtns {
  display: flex;
  gap: 40px;
  margin-right: 36px;
}
.omnibox {
  display: flex;
  flex: 1;
  align-items: center;
  gap: 16px;
  height: 68px;
  padding: 0 32px 0 10px;
  border-radius: 34px;
  background: #523878;
}
.siteinfo {
  display: flex;
  align-items: center;
  justify-content: center;
  width: 48px;
  height: 48px;
  border: 0;
  border-radius: 50%;
  background: #68449a;
}
.url {
  flex: 1;
  min-width: 0;
  padding: 0;
  border: 0;
  outline: 0;
  background: none;
  color: #fff;
  font: inherit;
  font-size: 26px;
}
.extensions {
  display: flex;
  align-items: center;
  gap: 40px;
  margin-left: 36px;
}
.divider {
  width: 4px;
  height: 32px;
  margin: 0 36px 0 33px;
  border-radius: 2px;
  background: #422b62;
}
.verify {
  display: flex;
  align-items: center;
  gap: 12px;
  width: 238px;
  height: 68px;
  margin: 0 28px;
  padding: 0 0 0 20px;
  border: 0;
  border-radius: 34px;
  background: #7050a2;
  color: #d6dcfa;
  white-space: nowrap;
}
.avatar {
  fill: #fff;
  font-size: 14px;
  text-anchor: middle;
}
.bookmarks {
  display: flex;
  align-items: center;
  height: 78px;
  padding-left: 36px;
}
.bookmarks .divider {
  margin: 0 28px;
}
.bookmark {
  display: flex;
  align-items: center;
  gap: 12px;
  margin-right: 36px;
  color: #fff;
  white-space: nowrap;
}
.isfolder svg {
  width: 40px;
}
.usc {
  fill: #f5c542;
  font-family: "Liberation Serif", serif;
  font-size: 14px;
  text-anchor: middle;
}

/* Page */
.viewport {
  display: flex;
  flex: 1;
  min-height: 0;
  overflow: hidden;
  background: #fff;
}
.page {
  display: flex;
  flex: 1;
  flex-direction: column;
  align-items: center;
  min-width: 0;
  padding-top: 26px;
  font-family: Roboto, sans-serif;
  font-size: 32px;
  line-height: 48px;
  color: #212529;
}
.autodetect {
  display: flex;
  align-items: center;
  letter-spacing: 1px;
}
.required {
  color: #d04848;
}
.autodetect input {
  width: 32px;
  height: 32px;
  margin: 0 16px;
  border: 2px solid #dee2e6;
  border-radius: 8px;
  appearance: none;
  background: #fff;
}
.actions,
.pills {
  display: flex;
  gap: 16px;
  margin-top: 32px;
}
.pills {
  gap: 14px;
}
.btn {
  display: flex;
  align-items: center;
  gap: 8px;
  height: 76px;
  padding: 0 24px;
  border: 2px solid transparent;
  border-radius: 12px;
  background: none;
}
.primary {
  background: #316df5;
  color: #fff;
}
.outline {
  border-color: #6c757d;
  color: #6c757d;
}
.results {
  background: #2d62f6;
  color: #fff;
}
.favorites {
  color: #2d62f6;
}
.forecast {
  margin: 98px 0 0;
  font-size: 36px;
  font-weight: 600;
  line-height: 44px;
}
.panel {
  width: 100%;
  max-width: 1730px;
  margin-top: 38px;
}
.detailrow {
  display: flex;
  align-items: center;
  justify-content: flex-end;
}
.details {
  display: flex;
  align-items: center;
  gap: 10px;
  color: #000;
}
.tabs {
  display: flex;
  justify-content: flex-end;
  gap: 10px;
  margin-top: 16px;
  padding-right: 10px;
  border-bottom: 4px solid #dedede;
}
.viewtab {
  height: 86px;
  padding: 16px 32px 0;
  border-bottom: 4px solid #dedede;
  color: #3a7bf6;
}
.current {
  border: 2px solid #dedede;
  border-bottom: 0;
  border-radius: 8px 8px 0 0;
  color: #000;
}

/* Chart */
.chart {
  position: relative;
}
.plot {
  width: 100%;
  font-family: "Liberation Sans", Arial, sans-serif;
  letter-spacing: 1px;
  fill: #333;
}
.title {
  font-size: 38px;
  font-weight: 700;
  text-anchor: middle;
}
.values {
  fill: #000;
  stroke: #fff;
  stroke-width: 4px;
  stroke-linejoin: round;
  paint-order: stroke;
  font-size: 13px;
  font-weight: 700;
  text-anchor: middle;
}
.yaxis {
  font-size: 16px;
  font-weight: 700;
  text-anchor: end;
}
.xaxis {
  font-size: 26px;
  text-anchor: middle;
}
.credits {
  fill: #999;
  font-size: 19px;
  text-anchor: end;
}
.tooltip {
  position: absolute;
  left: 1100px;
  top: 182px;
  width: 384px;
  padding: 16px 18px 14px;
  border-radius: 6px;
  background: #fff;
  box-shadow: 2px 4px 10px rgba(0, 0, 0, 0.5);
  color: #333;
  font-family: "Liberation Sans", Arial, sans-serif;
  font-size: 25px;
  letter-spacing: 1px;
  line-height: 30px;
  white-space: nowrap;
}
.tooltip strong {
  display: block;
}
.reading {
  display: flex;
  align-items: center;
  gap: 11px;
}
.reading::before {
  content: "";
  width: 12px;
  height: 12px;
  border-radius: 50%;
  background: #e64237;
}
.hum::before {
  background: #8fc4fa;
}
.air::before {
  background: #f0b155;
}
.wind::before {
  background: #4b45b0;
}
.scrollbar {
  display: flex;
  flex-direction: column;
  align-items: center;
  width: 30px;
  padding: 9px 0;
  background: #fcfcfc;
}
.track {
  display: flex;
  flex: 1;
  flex-direction: column;
  justify-content: flex-end;
  padding-bottom: 136px;
}
.thumb {
  width: 16px;
  height: 68%;
  border-radius: 8px;
  background: #8b8b8b;
}

/* Taskbar */
.taskbar {
  display: flex;
  align-items: center;
  height: 96px;
  padding: 0 38px 2px 24px;
  border-top: 2px solid #444547;
  background: #212325;
  color: #fff;
}
.appbtn {
  position: relative;
  display: flex;
  align-items: center;
  justify-content: center;
  width: 80px;
  height: 80px;
  padding: 0;
  border: 0;
  border-radius: 8px;
  background: none;
}
.tasksearch {
  display: flex;
  align-items: center;
  gap: 10px;
  width: 200px;
  height: 64px;
  margin: 0 10px 0 12px;
  padding: 0 0 0 46px;
  border: 0;
  border-radius: 32px;
  background: #303133;
}
.apps {
  display: flex;
  gap: 8px;
}
.active {
  background: #343537;
}
.open::after,
.active::after {
  content: "";
  position: absolute;
  bottom: 2px;
  width: 12px;
  height: 6px;
  border-radius: 3px;
  background: #999;
}
.active::after {
  width: 32px;
  background: #dd5ee6;
}
.badge {
  position: absolute;
  top: 6px;
  right: 5px;
  width: 32px;
  height: 32px;
  border-radius: 50%;
  background: #dd5ee6;
  color: #111;
  font-size: 22px;
  line-height: 32px;
  text-align: center;
}
.photo {
  background: none;
}
.letter {
  background: #128374;
  color: #d0efe8;
  font-size: 18px;
}
.pink {
  top: 0;
  right: 0;
  background: #ff98a4;
}
.teams {
  fill: #fff;
  font-size: 19px;
  font-weight: 700;
  text-anchor: middle;
}
.tray {
  display: flex;
  align-items: center;
  gap: 32px;
  margin-left: auto;
}
.appmoon {
  position: relative;
  margin: 0 20px 12px 0;
  padding: 0;
  border: 0;
  background: none;
}
.status {
  display: flex;
  gap: 16px;
}
.clock {
  display: flex;
  flex-direction: column;
  align-items: flex-end;
  width: 110px;
  font-size: 23px;
  line-height: 32px;
}
</style>
